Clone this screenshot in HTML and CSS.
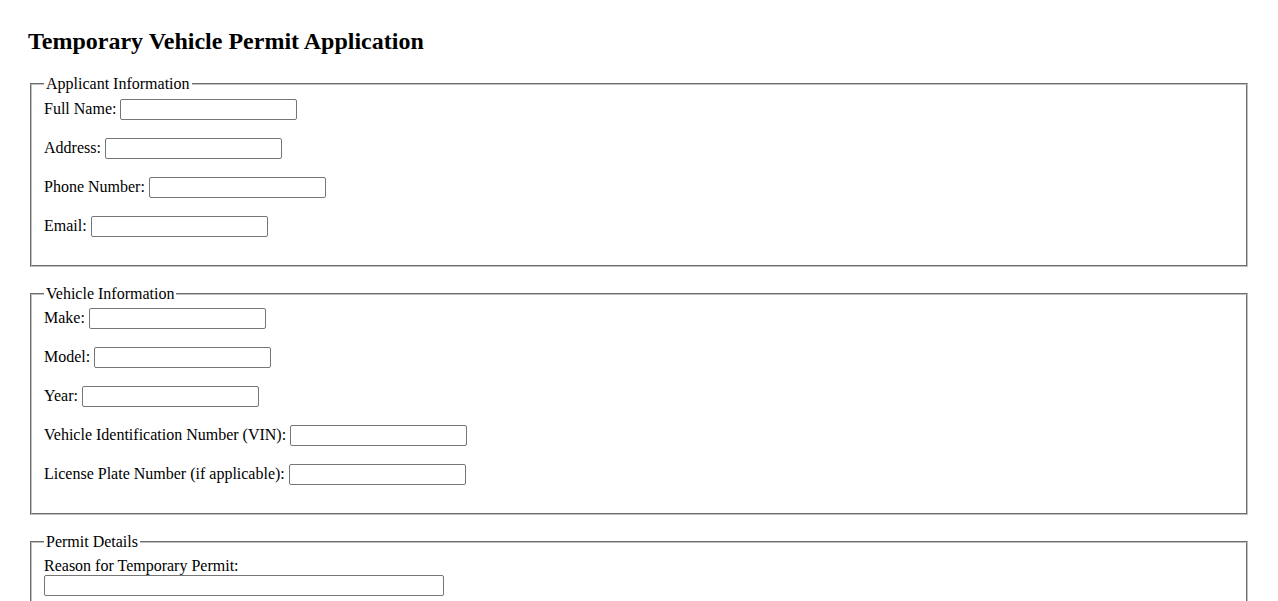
FILE: index.html
```html
<!DOCTYPE html>
<html lang="en">
<head>
<meta charset="utf-8">
<title>Temporary Vehicle Permit Application</title>
<link rel="stylesheet" href="styles.css">
</head>
<body>
<div class="page">
  <h1 class="title">Temporary Vehicle Permit Application</h1>
  <form class="form">
    <fieldset class="group">
      <legend class="group-legend">Applicant Information</legend>
      <div class="row"><label for="fullname">Full Name:</label> <input class="field" type="text" id="fullname"></div>
      <div class="row"><label for="address">Address:</label> <input class="field" type="text" id="address"></div>
      <div class="row"><label for="phone">Phone Number:</label> <input class="field" type="text" id="phone"></div>
      <div class="row"><label for="email">Email:</label> <input class="field" type="text" id="email"></div>
    </fieldset>
    <fieldset class="group">
      <legend class="group-legend">Vehicle Information</legend>
      <div class="row"><label for="make">Make:</label> <input class="field" type="text" id="make"></div>
      <div class="row"><label for="model">Model:</label> <input class="field" type="text" id="model"></div>
      <div class="row"><label for="year">Year:</label> <input class="field" type="text" id="year"></div>
      <div class="row"><label for="vin">Vehicle Identification Number (VIN):</label> <input class="field" type="text" id="vin"></div>
      <div class="row"><label for="plate">License Plate Number (if applicable):</label> <input class="field" type="text" id="plate"></div>
    </fieldset>
    <fieldset class="group">
      <legend class="group-legend">Permit Details</legend>
      <div class="row"><label class="block-label" for="reason">Reason for Temporary Permit:</label><input class="field field-wide" type="text" id="reason"></div>
    </fieldset>
  </form>
</div>
</body>
</html>
```
FILE: styles.css
```css
html, body {
  background: #ffffff;
}
body {
  margin: 8px;
  font-family: "Liberation Serif", "Times New Roman", serif;
  font-size: 16px;
  color: #000000;
}
.page {
  padding: 0 20px 20px;
}
.title {
  font-size: 24px;
  font-weight: bold;
  margin: 20px 0 20px;
}
.form {
  margin: 0;
}
.group {
  margin: 0 2px 18px;
  padding: 0.35em 0.75em 0.625em;
  border: 2px groove #c0c0c0;
}
.group-legend {
  padding: 0 2px;
}
.row {
  margin-bottom: 18px;
}
.field {
  box-sizing: border-box;
  width: 177px;
  height: 21px;
  padding: 1px 2px;
  border: 1px solid #767676;
  border-radius: 2px;
  font-family: "Liberation Sans", Arial, sans-serif;
  font-size: 13.333px;
  background: #ffffff;
}
.field-wide {
  width: 400px;
}
.block-label {
  display: block;
}
```
